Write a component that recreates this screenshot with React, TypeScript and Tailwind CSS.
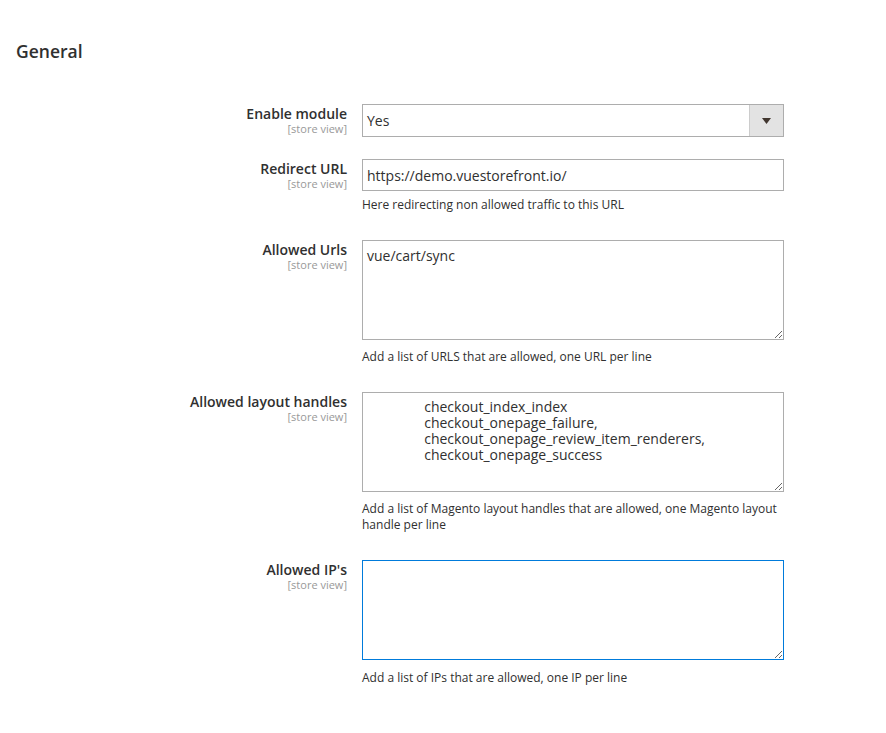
import React from 'react';

const font = { fontFamily: '"Open Sans", "Noto Sans", sans-serif' };

const Label = ({ title }: { title: string }) => {
  return (
    <div className="w-[347px] shrink-0 text-right pt-[2px]">
      <div className="text-[14px] leading-[16px] font-semibold text-[#303030]">{title}</div>
      <div className="text-[11px] leading-[14px] text-[#999999]">[store view]</div>
    </div>
  );
};

const Note = ({ children, top }: { children: React.ReactNode; top: string }) => (
  <div className={`text-[12px] leading-[16px] text-[#303030] ${top}`}>{children}</div>
);

const App = () => {
  const pad = '                ';
  const handles = [
    pad + 'checkout_index_index',
    pad + 'checkout_onepage_failure,',
    pad + 'checkout_onepage_review_item_renderers,',
    pad + 'checkout_onepage_success',
  ].join('\n');

  return (
    <div className="bg-white w-[886px] h-[733px] text-[#303030]" style={font}>
      <h2 className="pl-[16px] pt-[39px] text-[17.5px] leading-[24px] font-semibold text-[#303030]">General</h2>

      <div className="mt-[41px] flex flex-col">
        {/* Enable module */}
        <div className="flex items-start">
          <Label title="Enable module" />
          <div className="ml-[15px] w-[422px] h-[33px] border border-[#adadad] flex">
            <div className="flex-1 pl-[4px] text-[14px] flex items-center">Yes</div>
            <div className="w-[34px] bg-[#e3e3e3] border-l border-[#cccccc] flex items-center justify-center">
              <svg width="9" height="6" viewBox="0 0 9 6">
                <path d="M0 0 H9 L4.5 6 Z" fill="#41362f" />
              </svg>
            </div>
          </div>
        </div>

        {/* Redirect URL */}
        <div className="flex items-start mt-[22px]">
          <Label title="Redirect URL" />
          <div className="ml-[15px] w-[422px]">
            <input
              readOnly
              value="https://demo.vuestorefront.io/"
              className="block w-full h-[32px] border border-[#adadad] px-[4px] text-[14px] text-[#303030] outline-none"
            />
            <Note top="mt-[6px]">Here redirecting non allowed traffic to this URL</Note>
          </div>
        </div>

        {/* Allowed Urls */}
        <div className="flex items-start mt-[27px]">
          <Label title="Allowed Urls" />
          <div className="ml-[15px] w-[422px]">
            <textarea
              readOnly
              value="vue/cart/sync"
              className="block w-full h-[100px] border border-[#adadad] px-[4px] pt-[5px] text-[14px] leading-[19px] text-[#303030] outline-none"
            />
            <Note top="mt-[9px]">Add a list of URLS that are allowed, one URL per line</Note>
          </div>
        </div>

        {/* Allowed layout handles */}
        <div className="flex items-start mt-[27px]">
          <Label title="Allowed layout handles" />
          <div className="ml-[15px] w-[422px]">
            <textarea
              readOnly
              value={handles}
              className="block w-full h-[100px] border border-[#adadad] pl-[3px] pr-[4px] pt-[6px] text-[14px] leading-[16px] text-[#303030] outline-none"
            />
            <Note top="mt-[9px]">Add a list of Magento layout handles that are allowed, one Magento layout handle per line</Note>
          </div>
        </div>

        {/* Allowed IP's */}
        <div className="flex items-start mt-[27px]">
          <Label title="Allowed IP's" />
          <div className="ml-[15px] w-[422px]">
            <textarea
              readOnly
              value=""
              className="block w-full h-[100px] border border-[#007bdb] px-[4px] pt-[5px] text-[14px] leading-[19px] outline-none"
            />
            <Note top="mt-[10px]">Add a list of IPs that are allowed, one IP per line</Note>
          </div>
        </div>
      </div>
    </div>
  );
};

export default App;
